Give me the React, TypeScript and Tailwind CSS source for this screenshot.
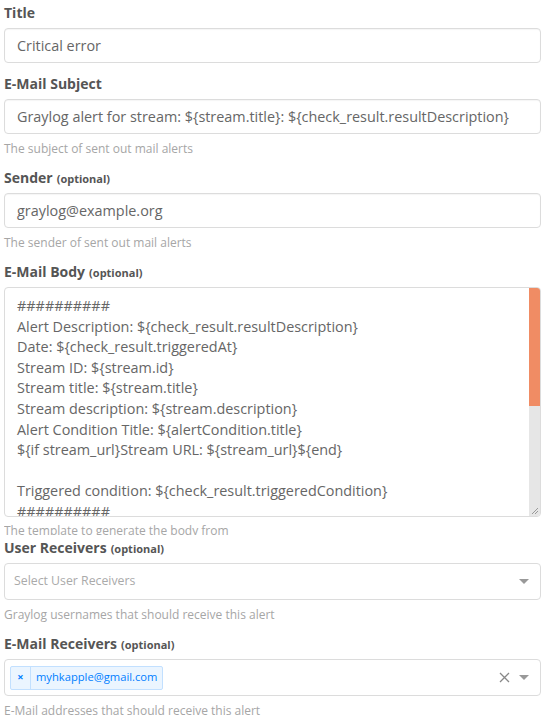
import React from 'react';

const font = { fontFamily: '"Open Sans", "Noto Sans", sans-serif' };

function Label({ text, optional }: { text: string; optional?: boolean }) {
  return (
    <label className="block text-[14px] font-bold text-[#555] leading-[20px] mb-[5px] h-[20px]">
      {text}
      {optional && <span className="text-[11px] font-bold ml-[4px] leading-[0]">(optional)</span>}
    </label>
  );
}

function Help({ text }: { text: string }) {
  return <p className="text-[12px] text-[#a6a6a6] leading-[16px] mt-[7px]">{text}</p>;
}

function TextInput({ value }: { value: string }) {
  return (
    <div className="h-[35px] border border-[#dcdcdc] rounded-[4px] bg-white px-[12px] flex items-center text-[14.4px] text-[#666] shadow-[inset_0_1px_1px_rgba(0,0,0,0.04)] whitespace-nowrap">
      {value}
    </div>
  );
}

function Caret() {
  return (
    <svg width="10" height="6" viewBox="0 0 10 6">
      <path d="M0 0 L10 0 L5 5 Z" fill="#999" />
    </svg>
  );
}

const body = [
  '##########',
  'Alert Description: ${check_result.resultDescription}',
  'Date: ${check_result.triggeredAt}',
  'Stream ID: ${stream.id}',
  'Stream title: ${stream.title}',
  'Stream description: ${stream.description}',
  'Alert Condition Title: ${alertCondition.title}',
  '${if stream_url}Stream URL: ${stream_url}${end}',
  '',
  'Triggered condition: ${check_result.triggeredCondition}',
  '##########',
];

export default function App() {
  return (
    <div className="w-[544px] h-[717px] overflow-hidden bg-white pl-[4px] pr-[3px] pt-[3px]" style={font}>
      <Label text="Title" />
      <TextInput value="Critical error" />

      <div className="mt-[11px]">
        <Label text="E-Mail Subject" />
        <TextInput value="Graylog alert for stream: ${stream.title}: ${check_result.resultDescription}" />
        <Help text="The subject of sent out mail alerts" />
      </div>

      <div className="mt-[11px]">
        <Label text="Sender" optional />
        <TextInput value="graylog@example.org" />
        <Help text="The sender of sent out mail alerts" />
      </div>

      <div className="mt-[11px]">
        <Label text="E-Mail Body" optional />
        <div className="relative h-[230px] border border-[#dcdcdc] rounded-[4px] bg-white overflow-hidden">
          <div className="pl-[12px] pt-[8px] pr-[20px] text-[14.4px] leading-[20.6px] text-[#666] whitespace-pre">
            {body.map((l, i) => (
              <div key={i}>{l || '\u00a0'}</div>
            ))}
          </div>
          {/* scrollbar */}
          <div className="absolute right-0 top-0 bottom-0 w-[11px] bg-[#e6e6e6]">
            <div className="h-[118px] bg-[#f08c64]" />
          </div>
          <svg className="absolute right-[1px] bottom-[1px]" width="9" height="9" viewBox="0 0 9 9">
            <path d="M8 2 L2 8 M8 5 L5 8" stroke="#999" strokeWidth="1" />
          </svg>
        </div>
        <p className="text-[12px] text-[#a6a6a6] leading-[16px] mt-[6px] h-[12px] overflow-hidden">
          The template to generate the body from
        </p>
      </div>

      <div className="mt-[3px]">
        <Label text="User Receivers" optional />
        <div className="h-[37px] border border-[#dcdcdc] rounded-[4px] bg-white pl-[9px] pr-[11px] flex items-center">
          <span className="flex-1 text-[12.3px] text-[#aaa]">Select User Receivers</span>
          <Caret />
        </div>
        <Help text="Graylog usernames that should receive this alert" />
      </div>

      <div className="mt-[11px]">
        <Label text="E-Mail Receivers" optional />
        <div className="h-[37px] border border-[#dcdcdc] rounded-[4px] bg-white pl-[5px] pr-[11px] flex items-center">
          <div className="flex-1 flex">
            <div className="flex items-stretch h-[24px] border border-[#c2e0ff] bg-[#ebf5ff] rounded-[2px] text-[#007eff] text-[11.2px]">
              <span className="w-[20px] flex items-center justify-center border-r border-[#c2e0ff] text-[11px] font-bold">×</span>
              <span className="px-[5px] flex items-center">myhkapple@gmail.com</span>
            </div>
          </div>
          <svg className="mr-[9px]" width="11" height="11" viewBox="0 0 11 11">
            <path d="M1 1 L10 10 M10 1 L1 10" stroke="#888" strokeWidth="1.3" />
          </svg>
          <Caret />
        </div>
        <Help text="E-Mail addresses that should receive this alert" />
      </div>
    </div>
  );
}
